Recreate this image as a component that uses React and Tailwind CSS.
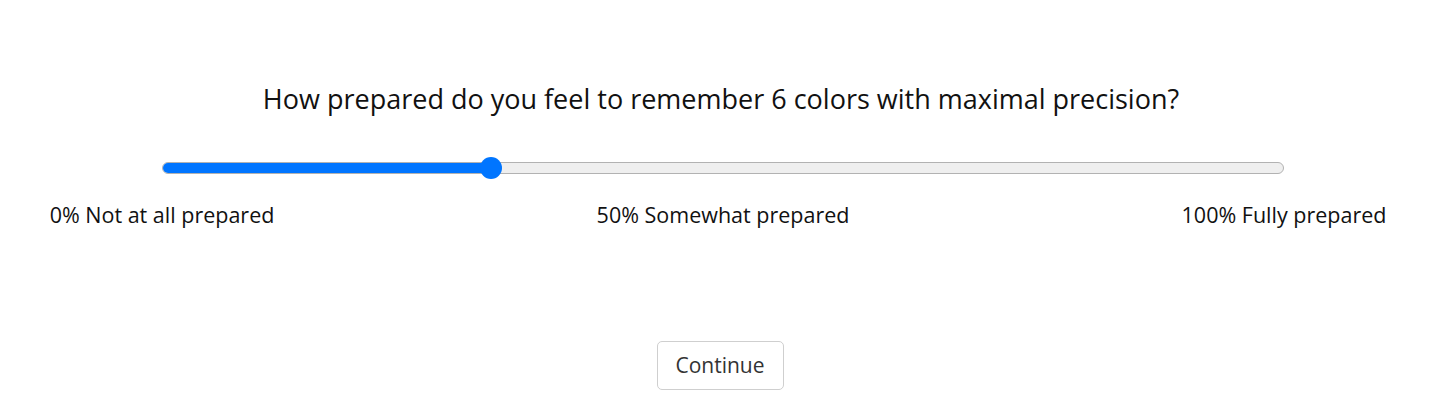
export default function App() {
  return (
    <div className="w-full h-[400px] bg-white flex flex-col items-center pt-[80px]" style={{ fontFamily: '"Open Sans", sans-serif' }}>
      <h1 className="text-[27px] leading-[37px] text-[#111] -ml-[12px]">How prepared do you feel to remember 6 colors with maximal precision?</h1>

      <div className="w-[1122px] mt-[40px] -ml-[8px]">
        {/* slider */}
        <div className="relative h-[22px] flex items-center">
          <div className="w-full h-[12px] rounded-full border border-[#b2b2b2] bg-[#efefef] overflow-hidden flex">
            <div className="w-[329px] h-full bg-[#0075ff]" />
          </div>
          <div className="absolute left-[318px] top-0 w-[22px] h-[22px] rounded-full bg-[#0075ff]" />
        </div>

        {/* labels */}
        <div className="flex justify-between mt-[21px] text-[21.5px] leading-[29px] text-[#111]">
          <div className="w-0 flex justify-center whitespace-nowrap">0% Not at all prepared</div>
          <div className="w-0 flex justify-center whitespace-nowrap">50% Somewhat prepared</div>
          <div className="w-0 flex justify-center whitespace-nowrap">100% Fully prepared</div>
        </div>
      </div>

      <button className="mt-[112px] w-[127px] h-[49px] border border-[#cfcfcf] rounded-[5px] bg-white text-[21px] text-[#333] -ml-[14px]">
        Continue
      </button>
    </div>
  );
}
